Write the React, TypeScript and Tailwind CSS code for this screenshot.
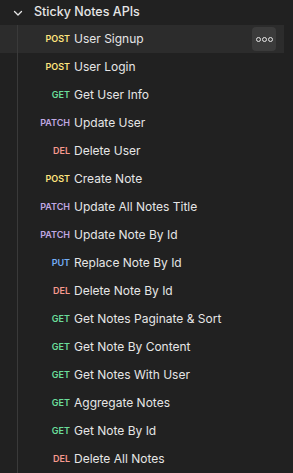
import React from "react";

type Item = { m: "GET" | "POST" | "PUT" | "PATCH" | "DEL"; t: string };

const items: Item[] = [
  { m: "POST", t: "User Signup" },
  { m: "POST", t: "User Login" },
  { m: "GET", t: "Get User Info" },
  { m: "PATCH", t: "Update User" },
  { m: "DEL", t: "Delete User" },
  { m: "POST", t: "Create Note" },
  { m: "PATCH", t: "Update All Notes Title" },
  { m: "PATCH", t: "Update Note By Id" },
  { m: "PUT", t: "Replace Note By Id" },
  { m: "DEL", t: "Delete Note By Id" },
  { m: "GET", t: "Get Notes Paginate & Sort" },
  { m: "GET", t: "Get Note By Content" },
  { m: "GET", t: "Get Notes With User" },
  { m: "GET", t: "Aggregate Notes" },
  { m: "GET", t: "Get Note By Id" },
  { m: "DEL", t: "Delete All Notes" },
];

const colors: Record<Item["m"], string> = {
  GET: "text-[#6bdd9a]",
  POST: "text-[#ffe47e]",
  PUT: "text-[#74aef6]",
  PATCH: "text-[#c0a8e1]",
  DEL: "text-[#f79a8e]",
};

export default function App() {
  return (
    <div
      className="w-[293px] h-[473px] bg-[#212121] overflow-hidden text-[#e6e6e6]"
      style={{ fontFamily: "Inter, 'Noto Sans', sans-serif" }}
    >
      <div className="h-[25px] flex items-center">
        <div className="w-[34px] flex justify-center pl-[2px]">
          <svg width="10" height="10" viewBox="0 0 10 10" fill="none">
            <path d="M1.5 3.5 L5 7 L8.5 3.5" stroke="#e6e6e6" strokeWidth="1.3" strokeLinecap="round" strokeLinejoin="round" />
          </svg>
        </div>
        <span className="text-[12.5px] font-medium">Sticky Notes APIs</span>
      </div>
      <div className="flex flex-col">
        {items.map((it, i) => (
          <div
            key={i}
            className={`h-[28px] w-[284px] flex items-center ${i === 0 ? "bg-[#2c2c2c]" : ""}`}
          >
            <div className="w-[17px] self-stretch" />
            <div className="w-[1px] self-stretch bg-[#3a3a3a]" />
            <div className="w-[56px] flex justify-end pr-[4px]">
              <span className={`text-[9px] font-semibold ${colors[it.m]}`}>{it.m}</span>
            </div>
            <span className="text-[12px] flex-1 whitespace-nowrap">{it.t}</span>
            {i === 0 && (
              <div className="w-[24px] h-[24px] mr-[8px] rounded-[4px] bg-[#3b3b3b] flex items-center justify-center gap-[1px]">
                {[0, 1, 2].map((d) => (
                  <span key={d} className="w-[5px] h-[5px] rounded-full border border-[#e6e6e6]" />
                ))}
              </div>
            )}
          </div>
        ))}
      </div>
    </div>
  );
}
